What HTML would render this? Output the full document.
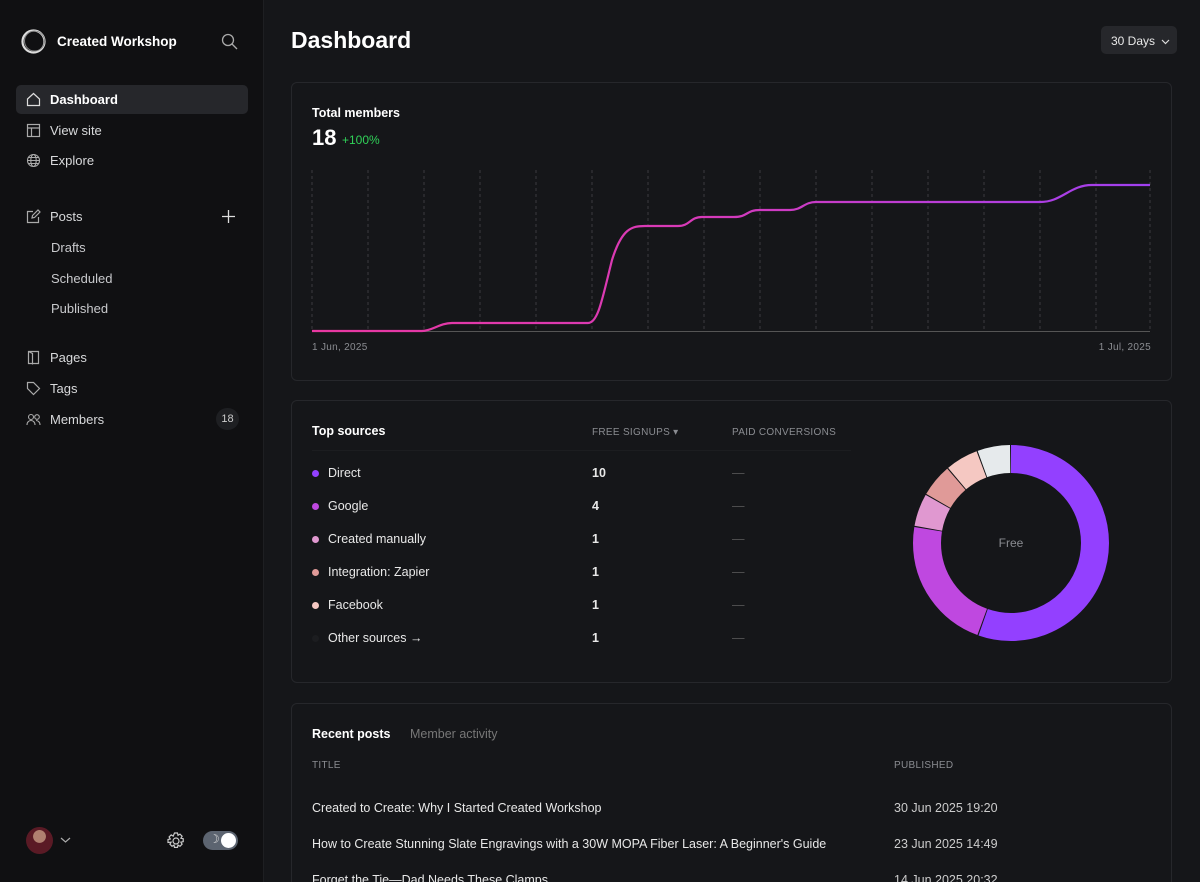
<!DOCTYPE html>
<html><head><meta charset="utf-8"><style>
*{box-sizing:border-box;margin:0;padding:0}
html,body{width:1200px;height:882px;overflow:hidden}
body{background:#151619;font-family:"Liberation Sans",sans-serif;color:#fff;position:relative}
.side{position:absolute;left:0;top:0;width:264px;height:882px;background:#101012;border-right:1px solid #1e1f22}
.brand{position:absolute;left:57px;top:34px;font-size:13.5px;font-weight:bold}
.nav{position:absolute;left:16px;width:232px;height:29px;display:flex;align-items:center;font-size:13px;color:#d8d9db}
.nav svg{position:absolute;left:10px;top:7px}
.nav span{position:absolute;left:34px}
.sub span{left:35px;color:#c8c9cc}
.act{background:#26272b;border-radius:5px;color:#fff;font-weight:bold}
.main{position:absolute;left:264px;top:0;right:0;height:882px;overflow:hidden}
h1{position:absolute;left:27px;top:27px;font-size:23px;font-weight:bold}
.days{position:absolute;left:837px;top:26px;width:76px;height:28px;background:#26272b;border-radius:5px;font-size:12px;color:#e8e8e8;padding:8px 0 0 10px}
.card{position:absolute;left:27px;width:881px;border:1px solid #26272b;border-radius:6px;background:#151619}
.lbl{font-size:10px;color:#8a8c91;letter-spacing:.3px}
.row{position:absolute;font-size:12.5px;color:#e8e8e8;white-space:nowrap}
.dot{position:absolute;width:7px;height:7px;border-radius:50%}
</style></head><body>
<div class="side">
<svg style="position:absolute;left:20px;top:28px" width="27" height="27" viewBox="0 0 27 27"><circle cx="13.5" cy="13.5" r="11" fill="none" stroke="#ddd" stroke-width="2.2"/><circle cx="14.5" cy="13" r="10" fill="none" stroke="#888" stroke-width="1"/></svg>
<div class="brand">Created Workshop</div>
<svg style="position:absolute;left:221px;top:33px" width="17" height="17" viewBox="0 0 17 17" fill="none" stroke="#aaa" stroke-width="1.3"><circle cx="7" cy="7" r="5.5"/><path d="M11 11l5 5"/></svg>
<div class="nav act" style="top:85px"><svg width="15" height="15" viewBox="0 0 15 15" fill="none" stroke="#ddd" stroke-width="1.2"><path d="M1.5 7L7.5 1.5 13.5 7V13.5H1.5Z"/></svg><span>Dashboard</span></div>
<div class="nav" style="top:116px"><svg width="15" height="15" viewBox="0 0 15 15" fill="none" stroke="#aaa" stroke-width="1.2"><rect x="1.5" y="1.5" width="12" height="12"/><path d="M1.5 5h12M5.5 5v8.5"/></svg><span>View site</span></div>
<div class="nav" style="top:146px"><svg width="15" height="15" viewBox="0 0 15 15" fill="none" stroke="#aaa" stroke-width="1.1"><circle cx="7.5" cy="7.5" r="6"/><ellipse cx="7.5" cy="7.5" rx="2.7" ry="6"/><path d="M1.5 7.5h12M2.5 4.5h10M2.5 10.5h10"/></svg><span>Explore</span></div>
<div class="nav" style="top:202px"><svg width="15" height="15" viewBox="0 0 15 15" fill="none" stroke="#aaa" stroke-width="1.2"><path d="M7 2.5H1.5v11h11V8M6 9l.5-2.5L12 1l2 2-5.5 5.5Z"/></svg><span>Posts</span><svg style="left:205px;top:7px" width="15" height="15" viewBox="0 0 15 15" stroke="#ddd" stroke-width="1.3"><path d="M7.5 1v13M1 7.5h13"/></svg></div>
<div class="nav sub" style="top:233px"><span>Drafts</span></div>
<div class="nav sub" style="top:264px"><span>Scheduled</span></div>
<div class="nav sub" style="top:294px"><span>Published</span></div>
<div class="nav" style="top:343px"><svg width="15" height="15" viewBox="0 0 15 15" fill="none" stroke="#aaa" stroke-width="1.2"><path d="M2.5 1.5h10v12h-10ZM2.5 1.5l4 2v11"/></svg><span>Pages</span></div>
<div class="nav" style="top:374px"><svg width="15" height="15" viewBox="0 0 15 15" fill="none" stroke="#aaa" stroke-width="1.2"><path d="M1.5 1.5h6l6 6-6 6-6-6Z"/></svg><span>Tags</span></div>
<div class="nav" style="top:405px"><svg width="16" height="15" viewBox="0 0 16 15" fill="none" stroke="#aaa" stroke-width="1.1"><circle cx="5" cy="5" r="2.5"/><circle cx="11" cy="5" r="2.3"/><path d="M1 13c0-3 2-4.5 4-4.5S9 10 9 13M10 8.5c2 0 4 1.5 4 4.5"/></svg><span>Members</span><div style="position:absolute;left:200px;top:3px;width:23px;height:22px;border-radius:11px;background:#1e1f22;font-size:11px;color:#ccc;text-align:center;line-height:22px">18</div></div>
<div style="position:absolute;left:26px;top:827px;width:27px;height:27px;border-radius:50%;background:radial-gradient(circle at 50% 35%,#b08070 0 28%,#5a1a25 30% 100%)"></div>
<svg style="position:absolute;left:60px;top:836px" width="11" height="8" viewBox="0 0 11 8" fill="none" stroke="#aaa" stroke-width="1.2"><path d="M1 2l4.5 4L10 2"/></svg>
<svg style="position:absolute;left:166px;top:831px" width="20" height="20" viewBox="0 0 20 20" fill="none" stroke="#ccc" stroke-width="1.2"><circle cx="10" cy="10" r="3"/><path d="M8.5 2h3l.5 2.3 2-1.2 2.1 2.1-1.2 2 2.3.5v3l-2.3.5 1.2 2-2.1 2.1-2-1.2-.5 2.3h-3l-.5-2.3-2 1.2-2.1-2.1 1.2-2L2 11.5v-3l2.3-.5-1.2-2 2.1-2.1 2 1.2Z"/></svg>
<div style="position:absolute;left:203px;top:831px;width:35px;height:19px;border-radius:10px;background:#5c6470"></div>
<div style="position:absolute;left:221px;top:833px;width:15px;height:15px;border-radius:50%;background:#fff"></div>
<div style="position:absolute;left:209px;top:832px;font-size:12px;color:#ddd">☽</div>
</div>
<div class="main">
<h1>Dashboard</h1>
<div class="days">30 Days <svg width="9" height="6" viewBox="0 0 9 6" fill="none" stroke="#ddd" stroke-width="1.2" style="margin-left:3px"><path d="M1 1l3.5 3.5L8 1"/></svg></div>
<div class="card" style="top:82px;height:299px">
<div style="position:absolute;left:20px;top:23px;font-size:12.5px;font-weight:bold">Total members</div>
<div style="position:absolute;left:20px;top:42px;font-size:22px;font-weight:bold">18</div>
<div style="position:absolute;left:50px;top:50px;font-size:12px;color:#30d158">+100%</div>
<div class="lbl" style="position:absolute;left:20px;top:259px">1 Jun, 2025</div>
<div class="lbl" style="position:absolute;right:20px;top:259px">1 Jul, 2025</div>
</div>
<div class="card" style="top:400px;height:283px">
<div style="position:absolute;left:20px;top:23px;font-size:12.5px;font-weight:bold">Top sources</div>
<div class="lbl" style="position:absolute;left:300px;top:26px">FREE SIGNUPS ▾</div>
<div class="lbl" style="position:absolute;left:440px;top:26px">PAID CONVERSIONS</div>
<div style="position:absolute;left:20px;right:320px;top:49px;border-top:1px solid #1c1d20"></div>
</div>
<div class="card" style="top:703px;height:200px">
<div style="position:absolute;left:20px;top:23px;font-size:12.5px;font-weight:bold">Recent posts</div>
<div style="position:absolute;left:118px;top:23px;font-size:12.5px;color:#777">Member activity</div>
<div class="lbl" style="position:absolute;left:20px;top:56px">TITLE</div>
<div class="lbl" style="position:absolute;left:602px;top:56px">PUBLISHED</div>
<div class="row" style="left:20px;top:97px">Created to Create: Why I Started Created Workshop</div>
<div class="row" style="left:602px;top:97px;color:#ccc">30 Jun 2025 19:20</div>
<div class="row" style="left:20px;top:133px">How to Create Stunning Slate Engravings with a 30W MOPA Fiber Laser: A Beginner's Guide</div>
<div class="row" style="left:602px;top:133px;color:#ccc">23 Jun 2025 14:49</div>
<div class="row" style="left:20px;top:169px">Forget the Tie—Dad Needs These Clamps</div>
<div class="row" style="left:602px;top:169px;color:#ccc">14 Jun 2025 20:32</div>
</div>
</div>
<svg style="position:absolute;left:0;top:0" width="1200" height="882">
<defs><linearGradient id="g" x1="312" x2="1150" y1="0" y2="0" gradientUnits="userSpaceOnUse"><stop offset="0" stop-color="#e838a0"/><stop offset=".45" stop-color="#d83ab8"/><stop offset="1" stop-color="#a040f0"/></linearGradient></defs>
<g stroke="#3a3b40" stroke-dasharray="3 3" stroke-width="1">
<path d="M312 170V331M368 170V331M424 170V331M480 170V331M536 170V331M592 170V331M648 170V331M704 170V331M760 170V331M816 170V331M872 170V331M928 170V331M984 170V331M1040 170V331M1096 170V331M1150 170V331"/></g>
<path d="M312 331.5H1150" stroke="#555" stroke-width="1"/>
<path d="M312 331H422C432 331 440 323 452 323H588C598 323 602 300 612 260C622 228 632 226 645 226H678C690 226 690 217 702 217H734C748 217 746 210 760 210H790C802 210 804 202 816 202H1040C1062 202 1070 185 1092 185H1150" fill="none" stroke="url(#g)" stroke-width="2.2"/>
<g transform="rotate(-90 1011 543)" fill="none" stroke-width="28">
<circle cx="1011" cy="543" r="84" stroke="#9340ff" stroke-dasharray="292.2 600" stroke-dashoffset="0"/>
<circle cx="1011" cy="543" r="84" stroke="#bf48e0" stroke-dasharray="116.3 600" stroke-dashoffset="-293.2"/>
<circle cx="1011" cy="543" r="84" stroke="#e098d0" stroke-dasharray="28.3 600" stroke-dashoffset="-410.5"/>
<circle cx="1011" cy="543" r="84" stroke="#e09a98" stroke-dasharray="28.3 600" stroke-dashoffset="-439.8"/>
<circle cx="1011" cy="543" r="84" stroke="#f5c8c2" stroke-dasharray="28.3 600" stroke-dashoffset="-469.1"/>
<circle cx="1011" cy="543" r="84" stroke="#e6eaec" stroke-dasharray="28.3 600" stroke-dashoffset="-498.4"/>
</g>
<text x="1011" y="547" fill="#8a8c91" font-size="12" text-anchor="middle" font-family="Liberation Sans">Free</text>
</svg>
<div style="position:absolute;left:312px;top:466px">
<div class="dot" style="top:4px;background:#9340ff"></div><div class="row" style="left:16px;top:0">Direct</div><div class="row" style="left:280px;top:0;font-weight:bold">10</div><div class="row" style="left:420px;top:0;color:#555">—</div>
<div class="dot" style="top:37px;background:#bf48e0"></div><div class="row" style="left:16px;top:33px">Google</div><div class="row" style="left:280px;top:33px;font-weight:bold">4</div><div class="row" style="left:420px;top:33px;color:#555">—</div>
<div class="dot" style="top:70px;background:#e098d0"></div><div class="row" style="left:16px;top:66px">Created manually</div><div class="row" style="left:280px;top:66px;font-weight:bold">1</div><div class="row" style="left:420px;top:66px;color:#555">—</div>
<div class="dot" style="top:103px;background:#e09a98"></div><div class="row" style="left:16px;top:99px">Integration: Zapier</div><div class="row" style="left:280px;top:99px;font-weight:bold">1</div><div class="row" style="left:420px;top:99px;color:#555">—</div>
<div class="dot" style="top:136px;background:#f5c8c2"></div><div class="row" style="left:16px;top:132px">Facebook</div><div class="row" style="left:280px;top:132px;font-weight:bold">1</div><div class="row" style="left:420px;top:132px;color:#555">—</div>
<div class="dot" style="top:169px;background:#1c1d20"></div><div class="row" style="left:16px;top:165px">Other sources →</div><div class="row" style="left:280px;top:165px;font-weight:bold">1</div><div class="row" style="left:420px;top:165px;color:#555">—</div>
</div>
</body></html>
